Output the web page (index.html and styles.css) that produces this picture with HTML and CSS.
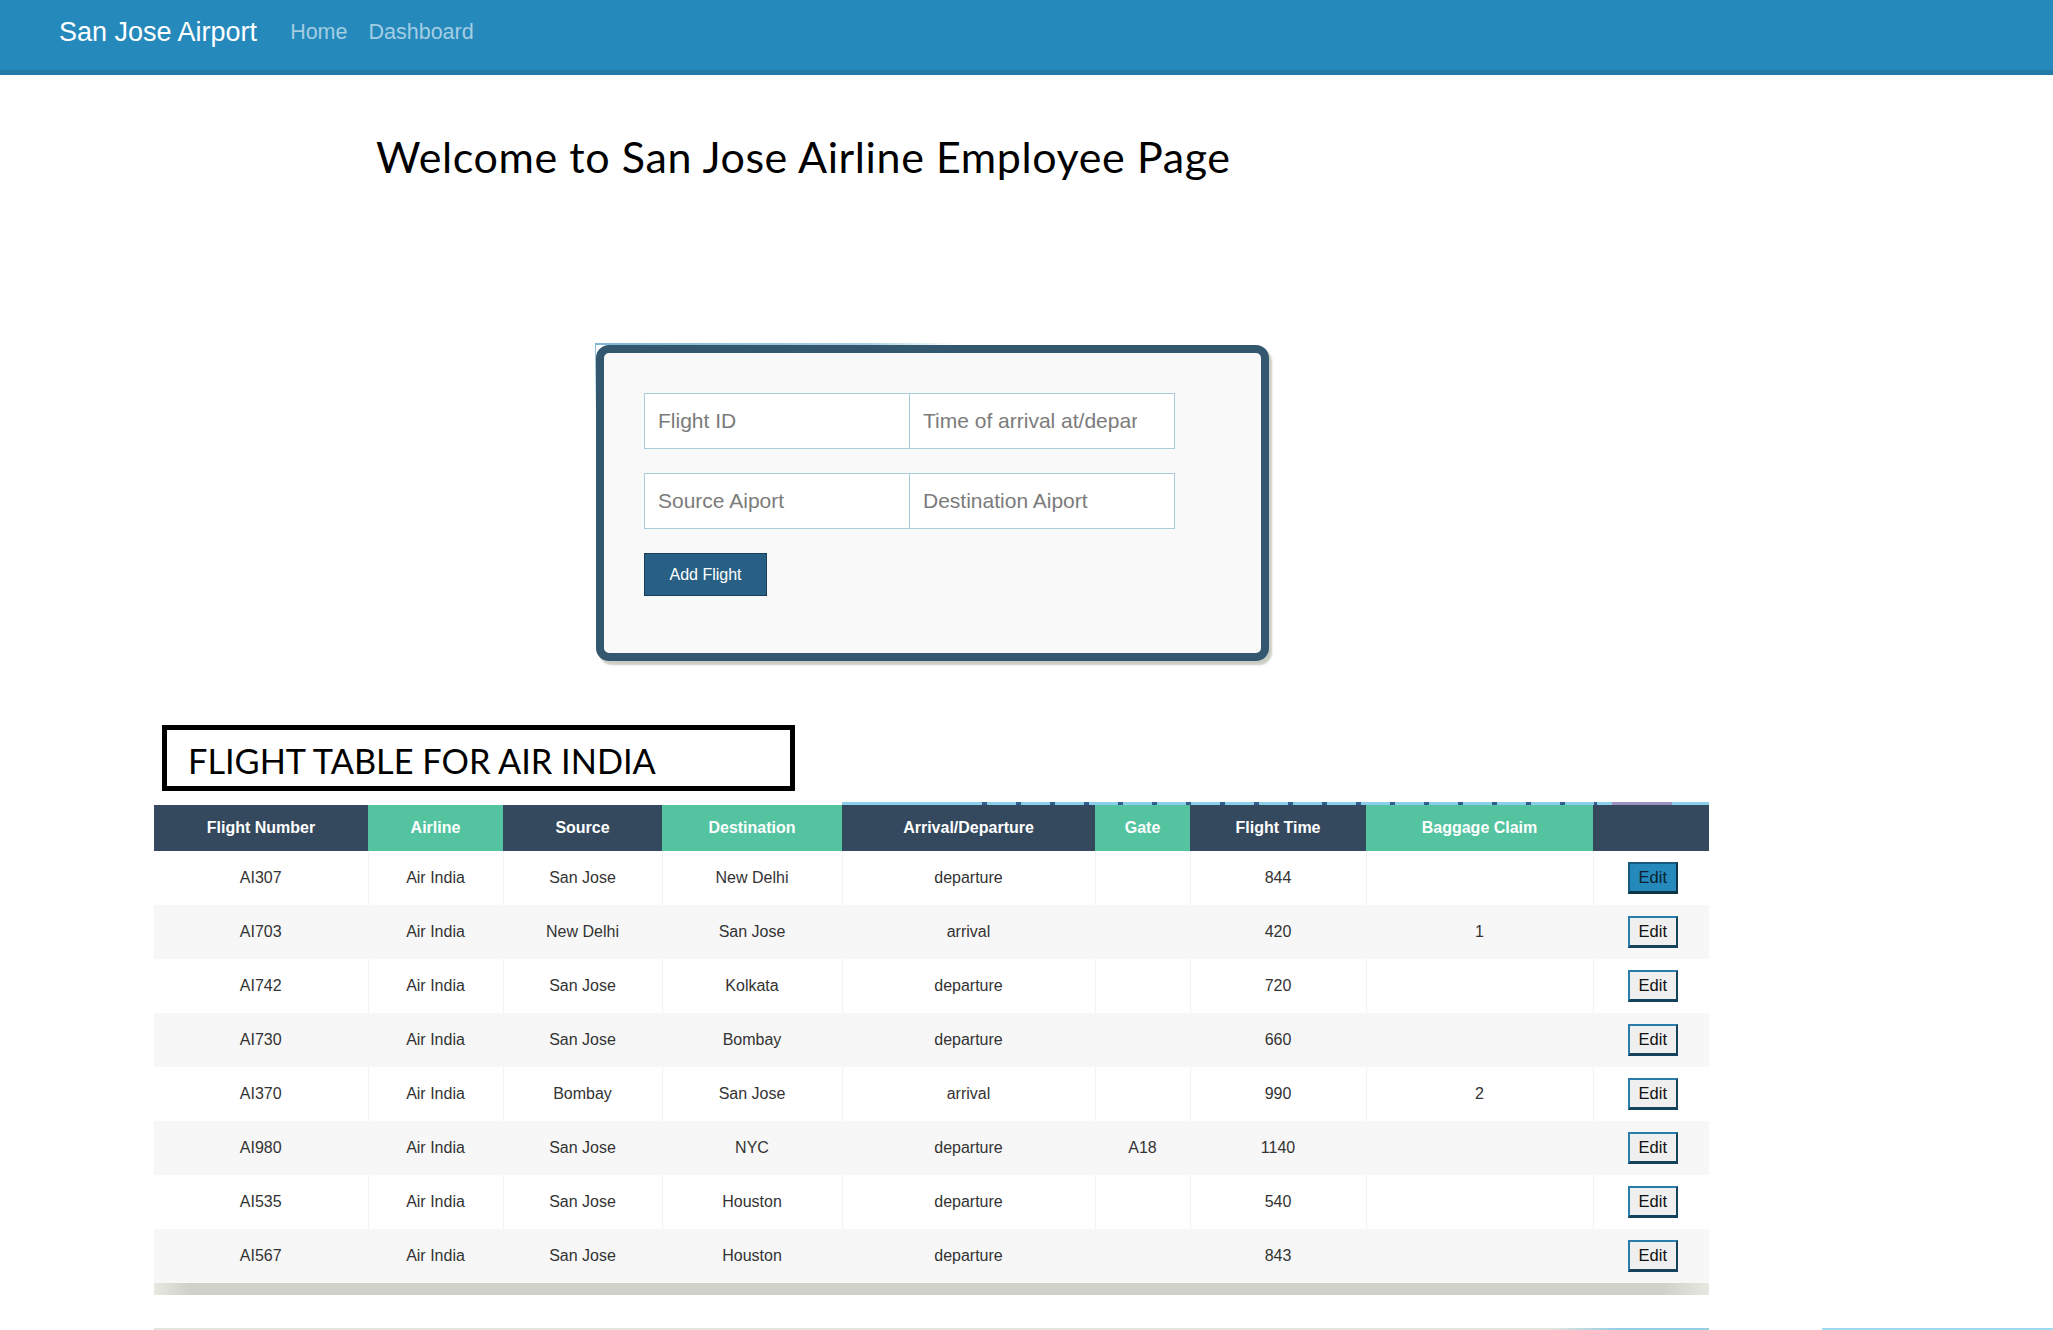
FILE: index.html
```html
<!DOCTYPE html>
<html lang="en">
<head>
<meta charset="utf-8">
<title>San Jose Airport</title>
<link rel="stylesheet" href="styles.css">
</head>
<body>
<header class="navbar">
  <a class="brand" href="#">San Jose Airport</a>
  <nav class="nav-links">
    <a href="#">Home</a>
    <a href="#">Dashboard</a>
  </nav>
</header>
<main class="page">
  <h1 class="welcome">Welcome to San Jose Airline Employee Page</h1>

  <section class="form-card">
    <form class="flight-form">
      <div class="input-row">
        <input class="field" type="text" placeholder="Flight ID">
        <input class="field field-right" type="text" placeholder="Time of arrival at/departure">
      </div>
      <div class="input-row">
        <input class="field" type="text" placeholder="Source Aiport">
        <input class="field field-right" type="text" placeholder="Destination Aiport">
      </div>
      <button class="add-btn" type="button">Add Flight</button>
    </form>
  </section>

  <h2 class="table-title">FLIGHT TABLE FOR AIR INDIA</h2>
  <div class="dot-line"></div>
  <table class="flights">
    <colgroup>
      <col class="c1"><col class="c2"><col class="c3"><col class="c4"><col class="c5"><col class="c6"><col class="c7"><col class="c8"><col class="c9">
    </colgroup>
    <thead>
      <tr>
        <th class="dark">Flight Number</th>
        <th class="green">Airline</th>
        <th class="dark">Source</th>
        <th class="green">Destination</th>
        <th class="dark">Arrival/Departure</th>
        <th class="green">Gate</th>
        <th class="dark">Flight Time</th>
        <th class="green">Baggage Claim</th>
        <th class="dark"></th>
      </tr>
    </thead>
    <tbody>
      <tr><td>AI307</td><td>Air India</td><td>San Jose</td><td>New Delhi</td><td>departure</td><td></td><td>844</td><td></td><td><button class="edit-btn active" type="button">Edit</button></td></tr>
      <tr><td>AI703</td><td>Air India</td><td>New Delhi</td><td>San Jose</td><td>arrival</td><td></td><td>420</td><td>1</td><td><button class="edit-btn" type="button">Edit</button></td></tr>
      <tr><td>AI742</td><td>Air India</td><td>San Jose</td><td>Kolkata</td><td>departure</td><td></td><td>720</td><td></td><td><button class="edit-btn" type="button">Edit</button></td></tr>
      <tr><td>AI730</td><td>Air India</td><td>San Jose</td><td>Bombay</td><td>departure</td><td></td><td>660</td><td></td><td><button class="edit-btn" type="button">Edit</button></td></tr>
      <tr><td>AI370</td><td>Air India</td><td>Bombay</td><td>San Jose</td><td>arrival</td><td></td><td>990</td><td>2</td><td><button class="edit-btn" type="button">Edit</button></td></tr>
      <tr><td>AI980</td><td>Air India</td><td>San Jose</td><td>NYC</td><td>departure</td><td>A18</td><td>1140</td><td></td><td><button class="edit-btn" type="button">Edit</button></td></tr>
      <tr><td>AI535</td><td>Air India</td><td>San Jose</td><td>Houston</td><td>departure</td><td></td><td>540</td><td></td><td><button class="edit-btn" type="button">Edit</button></td></tr>
      <tr><td>AI567</td><td>Air India</td><td>San Jose</td><td>Houston</td><td>departure</td><td></td><td>843</td><td></td><td><button class="edit-btn" type="button">Edit</button></td></tr>
    </tbody>
  </table>
  <div class="table-foot"></div>
  <div class="bottom-lines">
    <div class="seg-a"></div>
    <div class="seg-b"></div>
  </div>
</main>
</body>
</html>
```

FILE: styles.css
```css
html, body {
  margin: 0;
  padding: 0;
  background: #ffffff;
  overflow: hidden;
}

body {
  font-family: "Liberation Sans", Arial, sans-serif;
  color: #333333;
}

/* ---------- navbar ---------- */
.navbar {
  display: flex;
  align-items: flex-start;
  box-sizing: border-box;
  height: 75px;
  padding: 17px 0 0 59px;
  background: #2589bc;
  border-bottom: 5px solid #237aa7;
}

.brand {
  color: #ffffff;
  text-decoration: none;
  font-size: 27px;
  line-height: 31px;
  margin-right: 33px;
}

.nav-links {
  display: flex;
  gap: 21px;
}

.nav-links a {
  color: #a3cde3;
  text-decoration: none;
  font-size: 21.5px;
  line-height: 31px;
}

/* ---------- page ---------- */
.page {
  padding-left: 154px;
}

.welcome {
  margin: 57px 0 0 222px;
  font-family: Lato, "Open Sans", sans-serif;
  font-weight: 400;
  font-size: 43px;
  letter-spacing: 0.6px;
  line-height: 50px;
  color: #000000;
}

/* ---------- form card ---------- */
.form-card {
  position: relative;
  box-sizing: border-box;
  width: 673px;
  height: 316px;
  margin: 163px 0 0 442px;
  padding: 40px 0 0 40px;
  background: #f9f9f9;
  border: 8px solid #33576f;
  border-radius: 13px;
  box-shadow: 3px 4px 2px rgba(160, 162, 145, 0.55);
}

.form-card::before {
  content: "";
  position: absolute;
  top: -10px;
  left: -9px;
  width: 360px;
  height: 2px;
  background: linear-gradient(to right, #7fb6d4, #a9cfe3 75%, rgba(255, 255, 255, 0));
}

.form-card::after {
  content: "";
  position: absolute;
  top: -10px;
  left: -9px;
  width: 1px;
  height: 70px;
  background: linear-gradient(to bottom, #7fb6d4, rgba(255, 255, 255, 0));
}

.flight-form {
  display: flex;
  flex-direction: column;
  align-items: flex-start;
  gap: 24px;
}

.input-row {
  display: flex;
}

.field {
  box-sizing: border-box;
  width: 266px;
  height: 56px;
  margin: 0;
  padding: 0 13px;
  border: 1px solid #a9cbdc;
  background: #ffffff;
  font-family: "Liberation Sans", Arial, sans-serif;
  font-size: 21px;
  color: #555555;
  outline: none;
}

.field-right {
  margin-left: -1px;
  padding-right: 37px;
}

.field::placeholder {
  color: #7b7b7b;
  opacity: 1;
}

.add-btn {
  box-sizing: border-box;
  width: 123px;
  height: 43px;
  margin: 0;
  padding: 0;
  background: #285f85;
  border: 1px solid #173f5b;
  color: #ffffff;
  font-family: "Liberation Sans", Arial, sans-serif;
  font-size: 16px;
}

/* ---------- table title ---------- */
.table-title {
  box-sizing: border-box;
  width: 633px;
  height: 66px;
  margin: 64px 0 0 8px;
  padding: 6px 0 0 21px;
  border: 5px solid #000000;
  font-family: Lato, "Open Sans", sans-serif;
  font-weight: 400;
  font-size: 34.3px;
  line-height: 50px;
  color: #000000;
}

.dot-line {
  width: 867px;
  height: 3px;
  margin: 11px 0 0 688px;
  background:
    linear-gradient(to right, #8ccfea 0, #8ccfea 140px, transparent 140px, transparent 755px, #8ccfea 755px, #8ccfea 770px, #9b8fc0 770px, #9b8fc0 830px, #8ccfea 830px),
    repeating-linear-gradient(to right, #2f5e8f 0, #2f5e8f 5px, #8ccfea 5px, #8ccfea 34px),
    #8ccfea;
  background-position: 0 0, 140px 0, 0 0;
}

/* ---------- table ---------- */
.flights {
  width: 1555px;
  border-collapse: collapse;
  table-layout: fixed;
  font-size: 16px;
}

.c1 { width: 214px; }
.c2 { width: 135px; }
.c3 { width: 159px; }
.c4 { width: 180px; }
.c5 { width: 253px; }
.c6 { width: 95px; }
.c7 { width: 176px; }
.c8 { width: 227px; }
.c9 { width: 116px; }

.flights th {
  height: 46px;
  padding: 0;
  color: #ffffff;
  font-weight: 700;
  font-size: 16px;
  text-align: center;
  vertical-align: middle;
}

.flights th.dark { background: #34495e; }
.flights th.green { background: #53c3a0; }

.flights td {
  height: 54px;
  padding: 0;
  text-align: center;
  vertical-align: middle;
  color: #333333;
  border-right: 1px solid #f2f2f2;
}

.flights td:last-child {
  border-right: none;
}

.flights tbody tr:nth-child(odd) { background: #ffffff; }
.flights tbody tr:nth-child(even) { background: #f7f7f7; }
.flights tbody tr:nth-child(even) td { border-right-color: #f7f7f7; }

.edit-btn {
  box-sizing: border-box;
  width: 50px;
  height: 32px;
  margin: 0 0 0 3px;
  padding: 0;
  background: #efefef;
  border-style: solid;
  border-width: 2px 2px 3px 2px;
  border-color: #2a7dab #15435b #15435b #2a7dab;
  font-family: "Liberation Sans", Arial, sans-serif;
  font-size: 16.5px;
  color: #111111;
}

.edit-btn.active {
  background: #2589bc;
  border-color: #17597a #0c3548 #0c3548 #17597a;
  color: #0d2230;
}

.table-foot {
  width: 1555px;
  height: 12px;
  background: linear-gradient(to right, #e7e8e0 0, #d0d1c9 35px, #d0d1c9 1510px, #e7e8e0 1555px);
}

.bottom-lines {
  display: flex;
  height: 2px;
  margin-top: 33px;
}

.seg-a {
  width: 1555px;
  background: linear-gradient(to right, #e3e4dd 0, #e3e4dd 1400px, #97cfe2 1460px, #97cfe2 1555px);
}

.seg-b {
  flex: 1;
  margin-left: 113px;
  background: #9edaee;
}
```
